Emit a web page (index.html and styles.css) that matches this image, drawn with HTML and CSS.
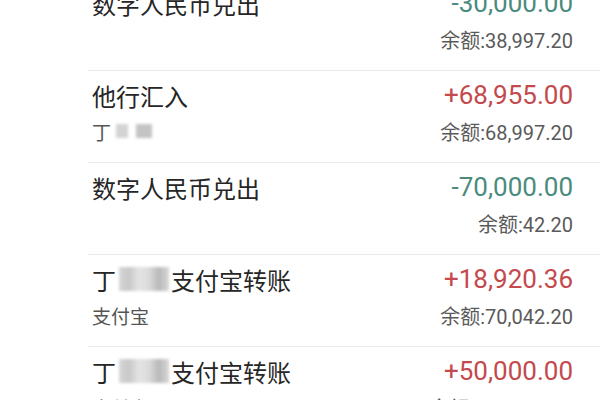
FILE: index.html
```html
<!DOCTYPE html>
<html lang="zh-CN">
<head>
    <meta charset="UTF-8">
    <meta name="viewport" content="width=device-width, initial-scale=1.0">
    <title>交易明细</title>
    <link rel="stylesheet" href="styles.css">
</head>
<body>
    <div class="tx-list">
        <div class="tx-row">
            <div class="tx-line">
                <span class="tx-title">数字人民币兑出</span>
                <span class="tx-amount out">-30,000.00</span>
            </div>
            <div class="tx-line sub">
                <span class="tx-sub"></span>
                <span class="tx-balance">余额:38,997.20</span>
            </div>
        </div>

        <div class="tx-row">
            <div class="tx-line">
                <span class="tx-title">他行汇入</span>
                <span class="tx-amount in">+68,955.00</span>
            </div>
            <div class="tx-line sub">
                <span class="tx-sub">丁<span class="mask small"></span><span class="mask small dark"></span></span>
                <span class="tx-balance">余额:68,997.20</span>
            </div>
        </div>

        <div class="tx-row">
            <div class="tx-line">
                <span class="tx-title">数字人民币兑出</span>
                <span class="tx-amount out">-70,000.00</span>
            </div>
            <div class="tx-line sub">
                <span class="tx-sub"></span>
                <span class="tx-balance">余额:42.20</span>
            </div>
        </div>

        <div class="tx-row">
            <div class="tx-line">
                <span class="tx-title">丁<span class="mask wide"></span>支付宝转账</span>
                <span class="tx-amount in">+18,920.36</span>
            </div>
            <div class="tx-line sub">
                <span class="tx-sub">支付宝</span>
                <span class="tx-balance">余额:70,042.20</span>
            </div>
        </div>

        <div class="tx-row">
            <div class="tx-line">
                <span class="tx-title">丁<span class="mask wide"></span>支付宝转账</span>
                <span class="tx-amount in">+50,000.00</span>
            </div>
            <div class="tx-line sub">
                <span class="tx-sub">支付宝</span>
                <span class="tx-balance">余额:120,042.20</span>
            </div>
        </div>
    </div>
</body>
</html>
```

FILE: styles.css
```css
body {
    margin: 0;
    background: #fff;
    font-family: Roboto, "Noto Sans CJK SC", sans-serif;
    overflow: hidden;
}
.tx-list {
    margin-top: -21px;
    padding-left: 88px;
}
.tx-row {
    height: 91px;
    padding: 9px 27px 0 4px;
    box-sizing: content-box;
    height: 82px;
    border-bottom: 1px solid #e9e9e9;
}
.tx-line {
    display: flex;
    justify-content: space-between;
    align-items: center;
    height: 30px;
}
.tx-line.sub {
    height: 26px;
    margin-top: 8px;
}
.tx-title {
    font-size: 24px;
    color: #262626;
    display: flex;
    align-items: center;
}
.tx-amount {
    font-size: 26px;
}
.tx-amount.in {
    color: #c4494d;
}
.tx-amount.out {
    color: #4a8b7d;
}
.tx-sub {
    font-size: 19px;
    color: #555;
    display: flex;
    align-items: center;
}
.tx-balance {
    font-size: 20px;
    color: #5a5a5a;
}
.mask {
    display: inline-block;
    background: linear-gradient(90deg, #d6d6d6 0%, #c8c8c8 20%, #e4e4e4 40%, #dadada 60%, #b9b9b9 80%, #d8d8d8 100%);
    filter: blur(1.5px);
}
.mask.wide {
    width: 50px;
    height: 24px;
    margin: 0 2px 0 3px;
}
.mask.small {
    width: 12px;
    height: 14px;
    margin-left: 5px;
    background: #d3d3d3;
}
.mask.dark {
    width: 16px;
    margin-left: 8px;
    background: #c4c4c4;
}
```
